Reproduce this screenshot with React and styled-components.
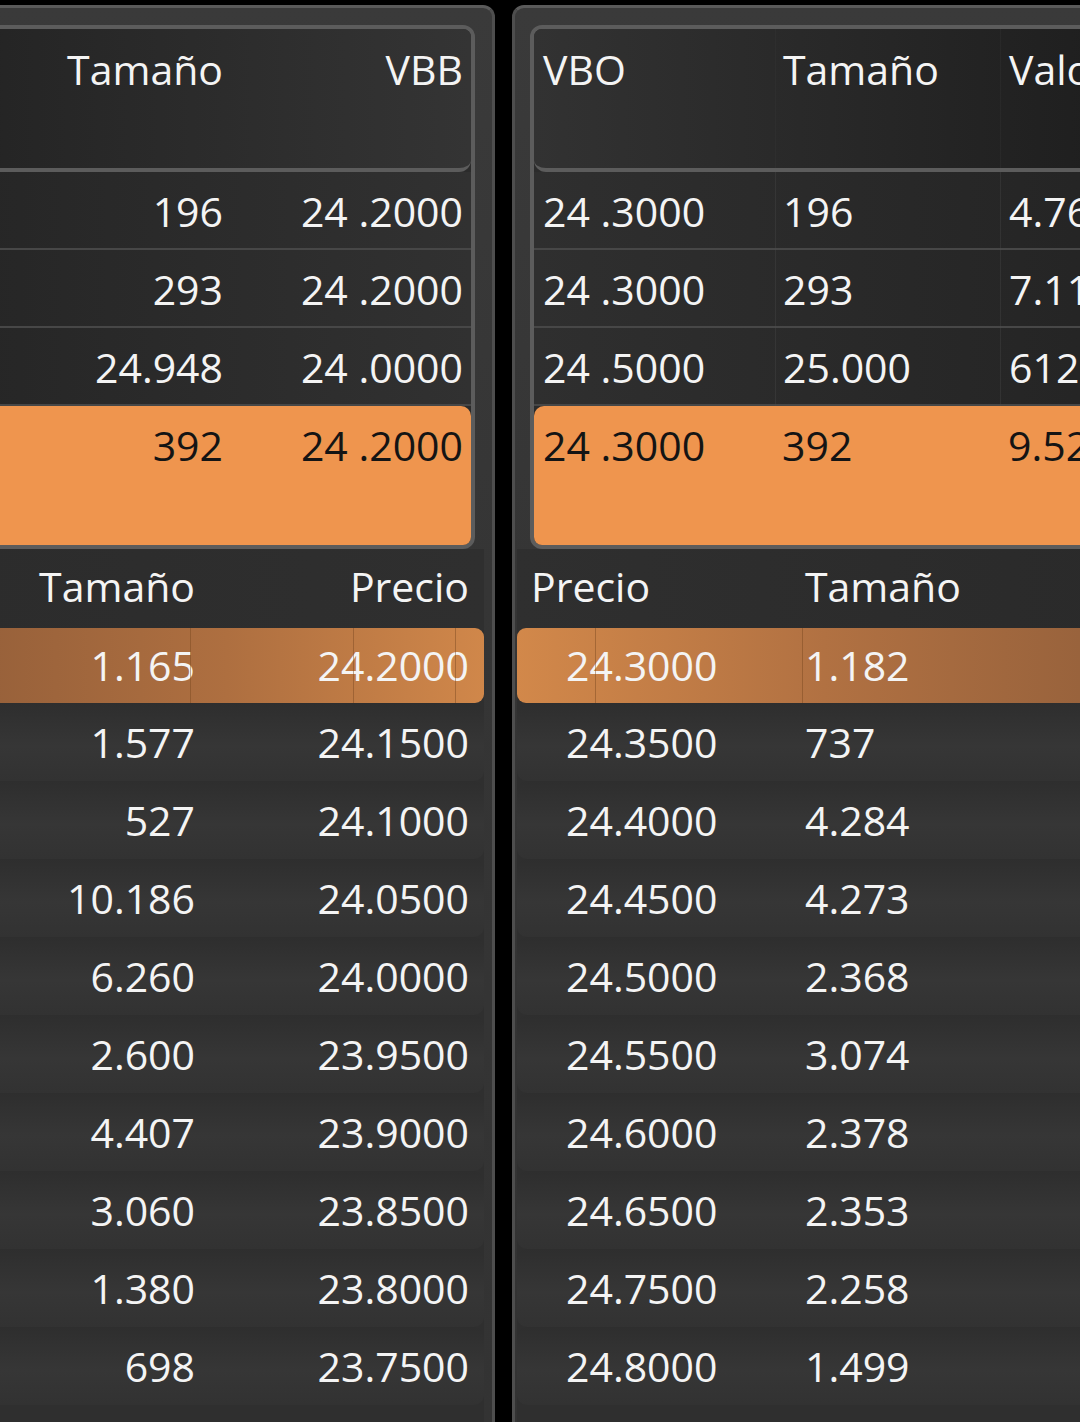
import React from "react";
import styled, { createGlobalStyle } from "styled-components";

const GlobalStyle = createGlobalStyle`
  html, body {
    margin: 0;
    padding: 0;
    background: #000;
    overflow: hidden;
  }
  body {
    font-family: "Open Sans", "Noto Sans", sans-serif;
    color: #f4f4f4;
  }
`;

const Screen = styled.div`
  width: 1080px;
  height: 1422px;
  overflow: hidden;
  display: flex;
  gap: 17px;
  align-items: flex-start;
  padding-top: 5px;
  box-sizing: border-box;
`;

const Panel = styled.div`
  flex: none;
  width: ${(p) => p.$width}px;
  margin-left: ${(p) => p.$offset || 0}px;
  height: 1430px;
  box-sizing: border-box;
  background: linear-gradient(180deg, #3a3a3a, #353535 40%, #333 100%);
  border-top: 3px solid #5a5a5a;
  border-${(p) => (p.$side === "left" ? "left" : "right")}: 3px solid #4e4e4e;
  border-radius: ${(p) => (p.$side === "left" ? "12px 0 0 0" : "0 12px 0 0")};
  display: flex;
  flex-direction: column;
  padding-top: 17px;
`;

const Card = styled.div`
  box-sizing: border-box;
  margin-${(p) => (p.$side === "left" ? "left" : "right")}: ${(p) => p.$gap}px;
  border: 4px solid #5c5c5c;
  border-radius: 12px;
  overflow: hidden;
  background: #2b2b2b;
`;

const CardHead = styled.div`
  display: grid;
  grid-template-columns: ${(p) => p.$cols};
  height: 139px;
  border-bottom: 4px solid #5c5c5c;
  border-radius: 0 0 12px 12px;
  background: ${(p) =>
    p.$side === "left"
      ? "linear-gradient(90deg, #242424, #343434)"
      : "linear-gradient(90deg, #323232, #1e1e1e)"};
`;

const TopRow = styled.div`
  display: grid;
  grid-template-columns: ${(p) => p.$cols};
  height: ${(p) => (p.$tall ? 139 : 76)}px;
  border-bottom: ${(p) => (p.$tall ? "none" : "2px solid #474747")};
  border-radius: ${(p) => (p.$tall ? "10px 10px 0 0" : "0")};
  background: ${(p) =>
    p.$hot
      ? "#ef954e"
      : p.$side === "left"
      ? "linear-gradient(90deg, #262626, #313131)"
      : "linear-gradient(90deg, #2f2f2f, #242424)"};
  color: ${(p) => (p.$hot ? "#141414" : "#f4f4f4")};
`;

const Cell = styled.div`
  font-size: 41px;
  line-height: 78px;
  height: 78px;
  white-space: nowrap;
  text-align: ${(p) => (p.$right ? "right" : "left")};
  padding-left: ${(p) => p.$pl || 0}px;
  border-left: ${(p) => (p.$line ? "1px solid rgba(80,80,80,0.3)" : "none")};
  box-sizing: border-box;
  align-self: start;
`;

const HeadCell = styled(Cell)`
  line-height: 80px;
  height: 139px;
  border-left: ${(p) => (p.$line ? "1px solid rgba(60,60,60,0.25)" : "none")};
`;

const Book = styled.div`
  box-sizing: border-box;
  margin-${(p) => (p.$side === "left" ? "right" : "left")}: ${(p) => p.$gap}px;
  background: #2f2f2f;
  flex: 1;
  display: flex;
  flex-direction: column;
`;

const BookHead = styled.div`
  display: grid;
  grid-template-columns: ${(p) => p.$cols};
  height: 79px;
  background: ${(p) =>
    p.$side === "left"
      ? "linear-gradient(90deg, #2c2c2c, #2f2f2f)"
      : "linear-gradient(90deg, #2f2f2f, #2a2a2a)"};
`;

const BookCell = styled.div`
  font-size: 41px;
  line-height: ${(p) => p.$h}px;
  white-space: nowrap;
  text-align: ${(p) => (p.$right ? "right" : "left")};
  padding-left: ${(p) => p.$pl || 0}px;
`;

const BookRow = styled.div`
  position: relative;
  display: grid;
  grid-template-columns: ${(p) => p.$cols};
  height: ${(p) => (p.$hot ? 75 : 78)}px;
  border-radius: ${(p) => (p.$hot ? 9 : 10)}px;
  background: ${(p) =>
    p.$hot
      ? p.$side === "left"
        ? "linear-gradient(90deg, #96603a, #ae6f40 50%, #d0874a)"
        : "linear-gradient(90deg, #d2884a, #b17142 50%, #94603b)"
      : "linear-gradient(180deg, #2e2e2e, #363636 55%, #323232)"};
`;

const Tick = styled.span`
  position: absolute;
  top: 0;
  bottom: 0;
  left: ${(p) => p.$x}px;
  width: 1px;
  background: rgba(120, 70, 30, 0.45);
`;

const leftTop = [
  ["196", "24 .2000"],
  ["293", "24 .2000"],
  ["24.948", "24 .0000"],
];
const rightTop = [
  ["24 .3000", "196", "4.763"],
  ["24 .3000", "293", "7.119"],
  ["24 .5000", "25.000", "612.500"],
];

const bids = [
  ["1.577", "24.1500"],
  ["527", "24.1000"],
  ["10.186", "24.0500"],
  ["6.260", "24.0000"],
  ["2.600", "23.9500"],
  ["4.407", "23.9000"],
  ["3.060", "23.8500"],
  ["1.380", "23.8000"],
  ["698", "23.7500"],
];
const asks = [
  ["24.3500", "737"],
  ["24.4000", "4.284"],
  ["24.4500", "4.273"],
  ["24.5000", "2.368"],
  ["24.5500", "3.074"],
  ["24.6000", "2.378"],
  ["24.6500", "2.353"],
  ["24.7500", "2.258"],
  ["24.8000", "1.499"],
];

const LT = "249px 240px";
const RT = "241px 225px 240px";
const LB = "225px 274px";
const RB = "288px 280px";

function BidSide() {
  return (
    <Panel $width={525} $offset={-30} $side="right">
      <Card $side="right" $gap={17}>
        <CardHead $cols={LT} $side="left">
          <HeadCell $right>Tamaño</HeadCell>
          <HeadCell $right>VBB</HeadCell>
        </CardHead>
        {leftTop.map(([a, b]) => (
          <TopRow key={a} $cols={LT} $side="left">
            <Cell $right>{a}</Cell>
            <Cell $right>{b}</Cell>
          </TopRow>
        ))}
        <TopRow $cols={LT} $side="left" $hot $tall>
          <Cell $right>392</Cell>
          <Cell $right>24 .2000</Cell>
        </TopRow>
      </Card>
      <Book $side="left" $gap={8}>
        <BookHead $cols={LB} $side="left">
          <BookCell $h={74} $right>Tamaño</BookCell>
          <BookCell $h={74} $right>Precio</BookCell>
        </BookHead>
        <BookRow $cols={LB} $side="left" $hot>
          <Tick $x={220} />
          <Tick $x={383} />
          <Tick $x={485} />
          <BookCell $h={75} $right>1.165</BookCell>
          <BookCell $h={75} $right>24.2000</BookCell>
        </BookRow>
        {bids.map(([a, b]) => (
          <BookRow key={b} $cols={LB} $side="left">
            <BookCell $h={78} $right>{a}</BookCell>
            <BookCell $h={78} $right>{b}</BookCell>
          </BookRow>
        ))}
      </Book>
    </Panel>
  );
}

function AskSide() {
  return (
    <Panel $width={620} $side="left">
      <Card $side="left" $gap={15}>
        <CardHead $cols={RT} $side="right">
          <HeadCell $pl={9}>VBO</HeadCell>
          <HeadCell $pl={7} $line>Tamaño</HeadCell>
          <HeadCell $pl={8} $line>Valor</HeadCell>
        </CardHead>
        {rightTop.map(([a, b, c]) => (
          <TopRow key={c} $cols={RT} $side="right">
            <Cell $pl={9}>{a}</Cell>
            <Cell $pl={7} $line>{b}</Cell>
            <Cell $pl={8} $line>{c}</Cell>
          </TopRow>
        ))}
        <TopRow $cols={RT} $side="right" $hot $tall>
          <Cell $pl={9}>24 .3000</Cell>
          <Cell $pl={7}>392</Cell>
          <Cell $pl={8}>9.526</Cell>
        </TopRow>
      </Card>
      <Book $side="right" $gap={2}>
        <BookHead $cols={RB} $side="right">
          <BookCell $h={74} $pl={14}>Precio</BookCell>
          <BookCell $h={74}>Tamaño</BookCell>
        </BookHead>
        <BookRow $cols={RB} $side="right" $hot>
          <Tick $x={78} />
          <Tick $x={285} />
          <BookCell $h={75} $pl={49}>24.3000</BookCell>
          <BookCell $h={75}>1.182</BookCell>
        </BookRow>
        {asks.map(([a, b]) => (
          <BookRow key={a} $cols={RB} $side="right">
            <BookCell $h={78} $pl={49}>{a}</BookCell>
            <BookCell $h={78}>{b}</BookCell>
          </BookRow>
        ))}
      </Book>
    </Panel>
  );
}

export default function App() {
  return (
    <>
      <GlobalStyle />
      <Screen>
        <BidSide />
        <AskSide />
      </Screen>
    </>
  );
}
